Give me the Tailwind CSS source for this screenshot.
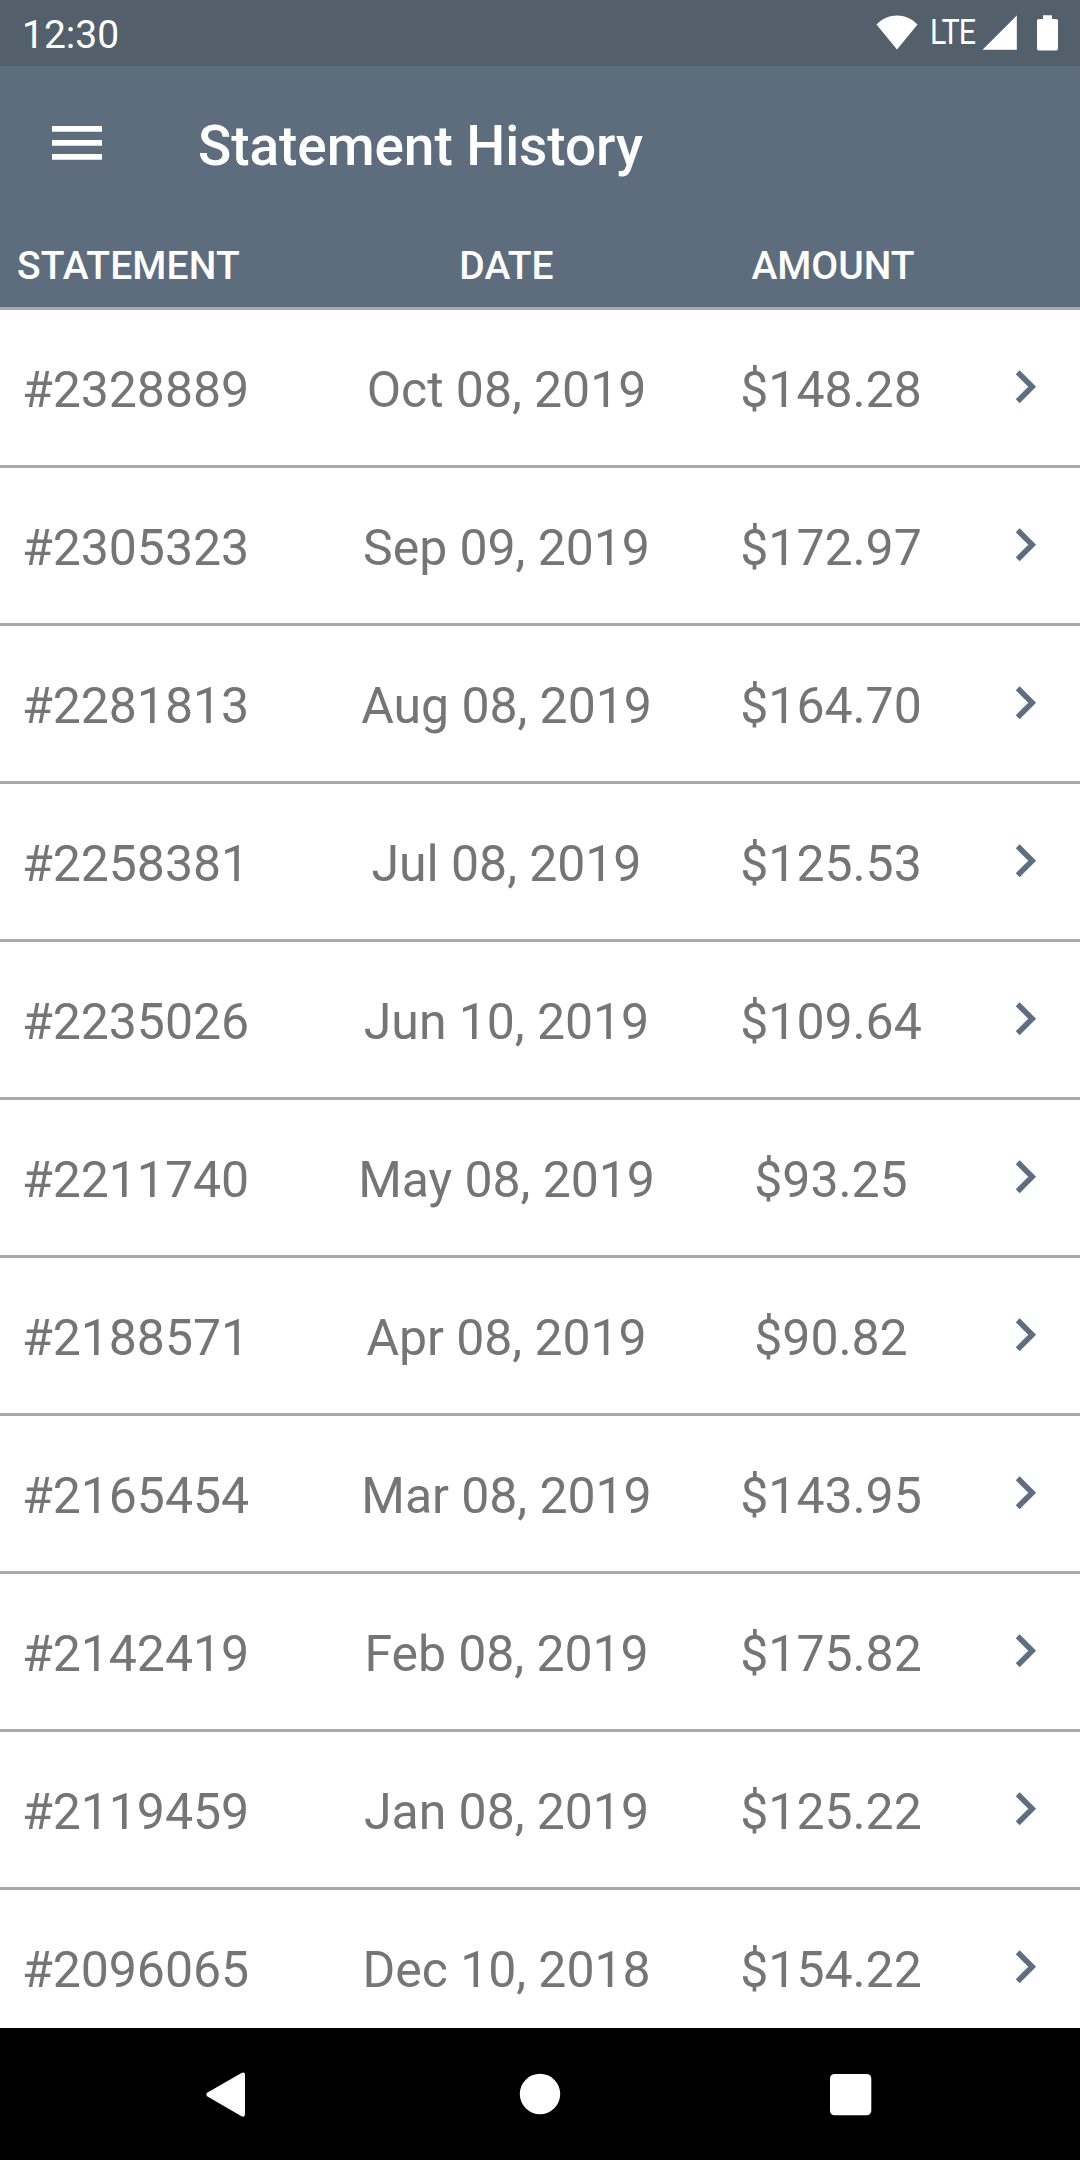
<!DOCTYPE html>
<html lang="en">
<head>
    <meta charset="UTF-8">
    <meta name="viewport" content="width=device-width, initial-scale=1.0">
    <title>Statement History</title>
    <script src="https://cdn.jsdelivr.net/npm/@tailwindcss/browser@4"></script>
</head>
<body class="bg-white font-[Roboto,sans-serif] flex flex-col w-[1080px] h-[2160px] overflow-hidden">
    <!-- Status bar -->
    <div class="flex items-center justify-between h-[66px] shrink-0 px-[22px] bg-[#53606c] text-white">
        <span class="text-[39px] leading-[66px] pt-[3px]">12:30</span>
        <div class="flex items-center h-full">
            <svg class="w-[42px] h-[66px]" viewBox="0 0 42 66" fill="currentColor"><path d="M0.5 24.5 C12 12.5 30 12.5 41.5 24.5 L21 49.5 Z"/></svg>
            <span class="ml-[12px] w-[52px] text-[35px] leading-[66px] tracking-[-1px] origin-left scale-x-[0.87]">LTE</span>
            <svg class="w-[36px] h-[66px]" viewBox="0 0 36 66" fill="currentColor"><path d="M0.5 49.7 L34.8 15.5 V49.7 Z"/></svg>
            <svg class="ml-[19px] w-[21px] h-[66px]" viewBox="0 0 21 66" fill="currentColor"><path d="M6 15.2 H15 V19 H19.2 A1.8 1.8 0 0 1 21 20.8 V48.7 A1.8 1.8 0 0 1 19.2 50.5 H1.8 A1.8 1.8 0 0 1 0 48.7 V20.8 A1.8 1.8 0 0 1 1.8 19 H6 Z"/></svg>
        </div>
    </div>

    <!-- App bar -->
    <header class="shrink-0 bg-[#5e6d7d] text-white border-b-[3px] border-[#a9a9a9]">
        <div class="flex items-center h-[154px] pl-[52px]">
            <svg class="w-[50px] h-[34px]" viewBox="0 0 50 34" fill="currentColor"><path d="M0 0h50v5.7H0zM0 14h50v5.7H0zM0 28h50v5.7H0z"/></svg>
            <h1 class="ml-[96px] pt-[6px] text-[55px] leading-[64px] font-medium tracking-[-0.08px]">Statement History</h1>
        </div>
        <div class="grid grid-cols-[344px_325px_325px_86px] h-[87px] pt-[22px] text-[39px] leading-[48px] font-medium">
            <span class="pl-[17px] tracking-[0.1px]">STATEMENT</span>
            <span class="text-center">DATE</span>
            <span class="pl-[3px] text-center">AMOUNT</span>
        </div>
    </header>

    <!-- Statements -->
    <main id="statements" class="flex-1 overflow-hidden text-[50px] leading-[60px] tracking-[-0.06px] text-[#757575]"></main>

    <!-- Navigation bar -->
    <nav class="h-[132px] shrink-0 bg-black text-white">
        <svg class="w-[1080px] h-[132px]" viewBox="0 0 1080 132" fill="currentColor">
            <path d="M207.5 64.5 L241.5 45 Q245 43.5 245 47 V86 Q245 89.8 241.5 88.2 L207.5 68.5 Q205 66.5 207.5 64.5 Z"/>
            <circle cx="540" cy="66" r="20.2"/>
            <rect x="830" y="46" width="41.3" height="41.3" rx="4.5"/>
        </svg>
    </nav>

    <script>
        const statements = [
            ["#2328889", "Oct 08, 2019", "$148.28"],
            ["#2305323", "Sep 09, 2019", "$172.97"],
            ["#2281813", "Aug 08, 2019", "$164.70"],
            ["#2258381", "Jul 08, 2019", "$125.53"],
            ["#2235026", "Jun 10, 2019", "$109.64"],
            ["#2211740", "May 08, 2019", "$93.25"],
            ["#2188571", "Apr 08, 2019", "$90.82"],
            ["#2165454", "Mar 08, 2019", "$143.95"],
            ["#2142419", "Feb 08, 2019", "$175.82"],
            ["#2119459", "Jan 08, 2019", "$125.22"],
            ["#2096065", "Dec 10, 2018", "$154.22"]
        ];

        document.getElementById("statements").innerHTML = statements.map(([id, date, amount]) => `
            <div class="grid grid-cols-[344px_325px_325px_86px] items-center h-[158px] border-b-[3px] border-[#a9a9a9]">
                <span class="pl-[22px] pt-[5px]">${id}</span>
                <span class="pt-[5px] text-center">${date}</span>
                <span class="pt-[5px] pr-[1px] text-center">${amount}</span>
                <svg class="ml-[21px] mb-[2px] w-[22px] h-[34px] text-[#5e6d7f]" viewBox="0 0 22 34" fill="none" stroke="currentColor" stroke-width="5.5"><path d="M2.7 2.3 L17.2 16.8 L2.7 31.3"/></svg>
            </div>`).join("");
    </script>
</body>
</html>
